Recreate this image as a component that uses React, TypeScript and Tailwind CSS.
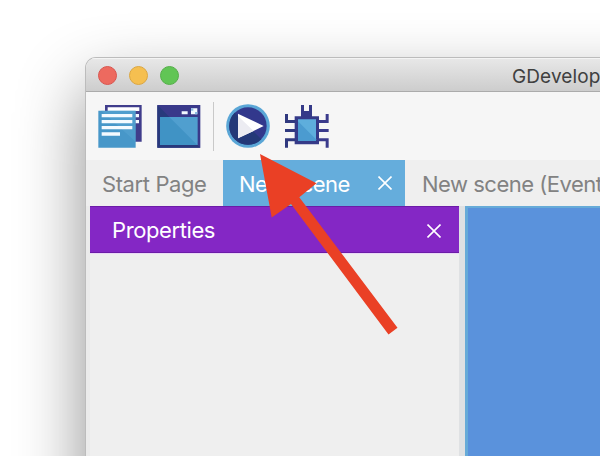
import React from 'react';

function SceneListIcon() {
  return (
    <svg width="44" height="44" viewBox="0 0 132 132" className="shrink-0">
      <path d="M21 3H131V113H21Z" fill="#403d8c" />
      <path d="M29 10H124V21H29Z" fill="#fff" />
      <path d="M1 20H113V131H1Z" fill="#4797c9" />
      <path d="M10 20H113V113Z" fill="#5eaad8" opacity=".4" />
      <path d="M11 30H103V40H11ZM11 48H103V58H11ZM11 66H103V76H11ZM11 85H66V95H11Z" fill="#f4faff" />
      <path d="M113 30H123V40H113ZM113 48H123V58H113Z" fill="#f4faff" />
    </svg>
  );
}

function WindowIcon() {
  return (
    <svg width="44" height="44" viewBox="0 0 132 132" className="shrink-0">
      <path d="M1 3H130V131H1Z" fill="#39398a" />
      <path d="M1 3L130 131H1Z" fill="#28397c" />
      <path d="M9 39H122V123H9Z" fill="#509fcf" />
      <path d="M37 39L121 123H9V39Z" fill="#4093c5" />
      <path d="M74 22H92V31H74ZM102 13H121V31H102Z" fill="#f2f9ff" />
      <path d="M102 13H109V20H102ZM114 24H121V31H114Z" fill="#8dbde1" />
    </svg>
  );
}

function PlayIcon() {
  return (
    <svg width="44" height="44" viewBox="0 0 132 132" className="shrink-0">
      <circle cx="66" cy="66" r="65.5" fill="#5aa6d6" />
      <circle cx="66" cy="66" r="56" fill="#32388c" />
      <path d="M26 26A56 56 0 0 0 106 106Z" fill="#233878" />
      <path d="M36 29L113 66L36 103Z" fill="#fff" />
      <path d="M36 36L83 81L36 103Z" fill="#ececf2" />
    </svg>
  );
}

function BugIcon() {
  return (
    <svg width="44" height="44" viewBox="0 0 132 132" className="shrink-0">
      <path d="M48 3H57V21H72V3H81V40H48Z" fill="#353a88" />
      <path d="M29 37H102V121H29Z" fill="#353a88" />
      <path d="M0 30H9V48H30V57H0ZM0 75H30V84H0ZM0 103H30V112H9V131H0Z" fill="#30397f" />
      <path d="M131 30H122V48H101V57H131ZM131 75H101V84H131ZM131 103H101V112H122V131H131Z" fill="#3b3b8c" />
      <path d="M39 46H93V111H39Z" fill="#5eaedc" />
      <path d="M39 52L93 106V111H39Z" fill="#4b9bd0" />
    </svg>
  );
}

function CloseIcon() {
  return (
    <svg width="14" height="14" viewBox="0 0 14 14" className="shrink-0" fill="none" stroke="#fff" strokeWidth="1.6">
      <path d="M.5 .5L13.5 13.5M13.5 .5L.5 13.5" />
    </svg>
  );
}

function TitleBar() {
  return (
    <div className="flex h-[34px] shrink-0 items-center border-b border-[#ababab] bg-gradient-to-b from-[#e8e8e8] to-[#cdcdcd] pl-3 pt-[2px] shadow-[inset_0_1px_0_#f4f4f4]">
      <div className="flex gap-3">
        <span className="size-[19px] rounded-full border border-[#d8554f] bg-[#ed6a5f]" />
        <span className="size-[19px] rounded-full border border-[#dba641] bg-[#f5bf50]" />
        <span className="size-[19px] rounded-full border border-[#55ae4a] bg-[#61c555]" />
      </div>
      <span className="ml-[333px] whitespace-nowrap pt-[2px] text-[19px] leading-none tracking-[0.1px] text-[#404040]">GDevelop 5</span>
    </div>
  );
}

function Toolbar() {
  return (
    <div className="flex h-[68px] shrink-0 items-center bg-[#f6f6f6] pl-3">
      <SceneListIcon />
      <div className="ml-[15px] flex">
        <WindowIcon />
      </div>
      <div className="ml-3 h-[49px] w-px bg-[#c9c9c9]" />
      <div className="ml-3 flex">
        <PlayIcon />
      </div>
      <div className="ml-[15px] flex">
        <BugIcon />
      </div>
    </div>
  );
}

function Tabs() {
  return (
    <div className="flex h-[46px] shrink-0 items-center whitespace-nowrap bg-[#efefef] pl-[3px] text-[22px] tracking-[-0.4px] text-[#828282]">
      <div className="flex h-full w-[134px] items-center pl-[13px] pt-[2px]">Start Page</div>
      <div className="flex h-full w-[182px] items-center justify-between bg-[#65addc] pl-4 pr-[13px] text-white">
        <span className="pt-[2px] tracking-[-0.6px]">New scene</span>
        <CloseIcon />
      </div>
      <div className="flex h-full items-center pl-[17px] pt-[2px] tracking-[-0.5px]">New scene (Events)</div>
    </div>
  );
}

export default function App() {
  return (
    <div className="relative h-[456px] w-[600px] overflow-hidden bg-white pl-[86px] pt-[58px] font-[Inter,'Liberation_Sans',sans-serif]">
      <div className="h-[640px] w-[1050px] rounded-[10px] shadow-[0_0_0_1px_#bcbcbc,0_30px_68px_rgba(0,0,0,0.45)]">
        <div className="flex h-full flex-col overflow-hidden rounded-[10px] bg-[#efefef]">
          <TitleBar />
          <Toolbar />
          <Tabs />
          <div className="flex min-h-0 flex-1">
            <div className="w-[4px] bg-[#ebebeb]" />
            <div className="w-[369px] bg-[#efefef]">
              <div className="flex h-[47px] items-center justify-between border-b border-t border-[#6c1ca8] bg-[#8427c5] pl-[22px] pr-[18px] pt-[2px] text-[22px] tracking-[-0.4px] text-white">
                <span>Properties</span>
                <CloseIcon />
              </div>
              <div className="h-px bg-[#ead8f6]" />
            </div>
            <div className="w-[6px] bg-[#dfe1e3]" />
            <div className="flex-1 border-l-[3px] border-t-2 border-[#67abd8] bg-[#5a92dc]" />
          </div>
        </div>
      </div>
      <svg className="pointer-events-none absolute inset-0" width="600" height="456" viewBox="0 0 600 456">
        <path d="M260 154L316.5 183.3L299.3 197.3L397.5 327.7L388.5 334.5L291 204L271.7 217.5Z" fill="#ea4025" />
      </svg>
    </div>
  );
}
